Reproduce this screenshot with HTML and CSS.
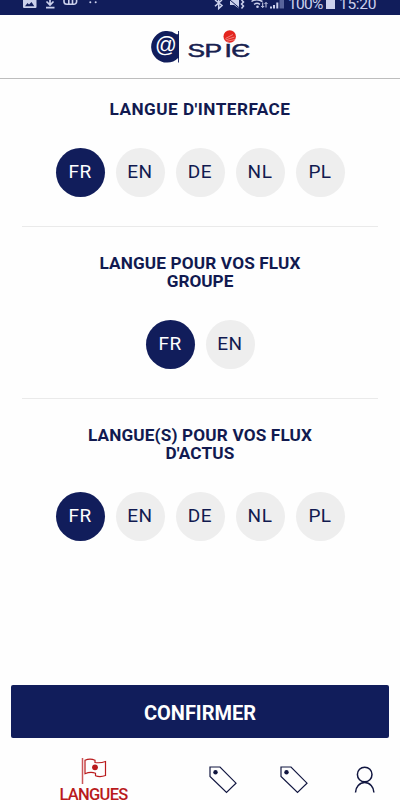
FILE: index.html
```html
<!DOCTYPE html>
<html lang="fr">
<head>
<meta charset="utf-8">
<title>SPIE</title>
<link rel="stylesheet" href="styles.css">
</head>
<body>
<div class="screen">
  <div class="status">
    <svg class="status-left" width="84" height="15" viewBox="0 0 84 15" fill="#ccd1ec">
      <path fill-rule="evenodd" d="M2 0h13.500v7q0 1-1 1H3Q2 8 2 7zM4 6.300h9.300L10.500 2 8 4.600 6.500 3z"/>
      <path d="M29 0v5M25.500 1.500L29 5l3.500-3.500M25 7.700h8.500" fill="none" stroke="#ccd1ec" stroke-width="1.700"/>
      <path d="M43 0v1.500a2.800 2.800 0 0 0 2.800 2.800h7a2.800 2.800 0 0 0 2.800-2.800V0M47.800 0v3.600M51.500 0v3.600" fill="none" stroke="#ccd1ec" stroke-width="1.600"/>
      <circle cx="69.300" cy="2.200" r="1"/><circle cx="74.700" cy="2.200" r="1"/>
    </svg>
    <div class="status-right">
      <svg width="72" height="15" viewBox="0 0 72 15" fill="#ccd1ec">
        <path d="M2 0l7 5.500L5.700 8.500V-2M2 6.300L9 0" fill="none" stroke="#ccd1ec" stroke-width="1.500"/>
        <path d="M17 0h4l5-1v9.500L21 5h-4z"/>
        <path d="M17 0l10 8.500" stroke="#111d5b" stroke-width="1"/>
        <path d="M28.500 0l2 2-2 2 2 2-2 2.500" fill="none" stroke="#ccd1ec" stroke-width="1.500"/>
        <path d="M38.500 1.500q5-3.500 11 0M41 4.300q3-2 6 0" fill="none" stroke="#ccd1ec" stroke-width="1.500"/>
        <circle cx="44.500" cy="6.700" r="1.300"/>
        <path d="M49.700 2.500v5M48.200 6L49.700 7.500l1.500-1.500M53 7.500v-5M51.500 4L53 2.500 54.500 4" fill="none" stroke="#ccd1ec"/>
        <path d="M57 6.500h2v2h-2zM60 5h2v3.500h-2zM63.300 2.500h2v6h-2z"/>
        <path d="M66.500 0h4.500v8.500h-4.500z" fill="#59649b"/>
      </svg>
      <span class="percent">100%</span>
      <span class="battery"></span>
      <span class="clock">15:20</span>
    </div>
  </div>

  <header class="header">
    <svg width="104" height="40" viewBox="0 0 104 40">
      <path d="M31 3v31.500h-.9V30A15.800 15.800 0 1 1 28.500 6.200h1.600V3z" fill="#111d5b"/>
      <text class="logo-at" x="18" y="24" text-anchor="middle">@</text>
      <g transform="translate(39.500 28.500) scale(1.500 1)">
        <text class="logo-name" x="0 11.300 24.700 29.200">SPIЄ</text>
      </g>
      <circle cx="81.700" cy="8.500" r="6.200" fill="#e4251f"/>
      <path d="M77.500 10.500l7.500-4M77.500 12l9-3M79 13.200l8-1.600" stroke="#f7aaa5" stroke-width=".7"/>
    </svg>
  </header>

  <main class="content">
    <section class="group">
      <h2 class="title"><span class="t1">LANGUE D'INTERFACE</span></h2>
      <div class="chips">
        <div class="chip active"><span>FR</span></div><div class="chip"><span>EN</span></div><div class="chip"><span>DE</span></div><div class="chip"><span>NL</span></div><div class="chip"><span>PL</span></div>
      </div>
    </section>
    <section class="group">
      <h2 class="title"><span class="t2">LANGUE POUR VOS FLUX</span><span>GROUPE</span></h2>
      <div class="chips">
        <div class="chip active"><span>FR</span></div><div class="chip"><span>EN</span></div>
      </div>
    </section>
    <section class="group">
      <h2 class="title"><span class="t2">LANGUE(S) POUR VOS FLUX</span><span class="t2">D'ACTUS</span></h2>
      <div class="chips">
        <div class="chip active"><span>FR</span></div><div class="chip"><span>EN</span></div><div class="chip"><span>DE</span></div><div class="chip"><span>NL</span></div><div class="chip"><span>PL</span></div>
      </div>
    </section>
  </main>

  <button class="confirm">CONFIRMER</button>

  <nav class="tabs">
    <div class="tab selected">
      <svg width="26" height="28" viewBox="0 0 26 28" fill="none" stroke="#b91a1c">
        <path d="M1.500 0v26" stroke-width="1.500" stroke="#cb5558"/>
        <path d="M4 2.200q5-2.200 10 0v2.300q5.500.8 10.500-1v14q-5.500 2-10 .2v-2.500q-5-1.700-10.500.5z" stroke-width="1.200"/>
        <circle cx="14" cy="9.300" r="2.900" fill="#b91a1c" stroke="none"/>
      </svg>
      <span class="tab-label">LANGUES</span>
    </div>
    <div class="tab tag">
      <svg width="28" height="28" viewBox="0 0 28 28"><path d="M1 1h10l16 16.200-9.500 9.300L1 10.500z" fill="none" stroke="#111640" stroke-width="1.200"/><circle cx="6.500" cy="6.300" r="2.200" fill="#111640"/></svg>
    </div>
    <div class="tab tag">
      <svg width="28" height="28" viewBox="0 0 28 28"><path d="M1 1h10l16 16.200-9.500 9.300L1 10.500z" fill="none" stroke="#111640" stroke-width="1.200"/><circle cx="6.500" cy="6.300" r="2.200" fill="#111640"/></svg>
    </div>
    <div class="tab user">
      <svg width="22" height="28" viewBox="0 0 22 28" fill="none" stroke="#111640" stroke-width="1.500"><circle cx="10.700" cy="8.500" r="7.300"/><path d="M1.500 26.500a9.200 10 0 0 1 18.400 0"/></svg>
    </div>
  </nav>
</div>
</body>
</html>
```
FILE: styles.css
```css
* { box-sizing: border-box; }
body { margin: 0; background: #fff; font-family: Roboto, "Liberation Sans", sans-serif; color: #111a50; }
.screen { width: 400px; height: 800px; overflow: hidden; display: flex; flex-direction: column; background: #fefefe; }
.status { height: 15px; flex: none; background: #111d5b; display: flex; justify-content: space-between; overflow: hidden; padding: 0 24px 0 21px; }
.status-right { display: flex; color: #ccd1ec; font-size: 15.500px; line-height: 18px; margin-top: -5px; }
.status-right svg { margin-top: 5px; margin-right: 3px; }
.battery { width: 9px; height: 14px; background: #ccd1ec; margin: 0 4px 0 4px; }
.percent { width: 34px; white-space: nowrap; letter-spacing: -.7px; }
.clock { width: 37px; white-space: nowrap; letter-spacing: -.3px; }
.header { height: 64px; flex: none; border-bottom: 1px solid #bdbdbd; display: flex; justify-content: center; padding-top: 13px; }
.logo-at { font: 21.500px "Liberation Sans", sans-serif; fill: #fff; }
.logo-name { font: 17.500px "Liberation Sans", sans-serif; fill: #17214f; stroke: #17214f; stroke-width: .5px; }
.content { padding: 0 22px; flex: none; height: 606px; }
.group { border-bottom: 1px solid #eaeaea; padding-top: 21px; }
.group + .group { padding-top: 27px; }
.group:last-child { border-bottom: 0; }
.title { margin: 0; font-size: 17.200px; font-weight: 700; line-height: 18px; text-align: center; white-space: nowrap; }
.title span { display: block; line-height: 18px; }
.t1 { letter-spacing: .47px; }
.t2 { letter-spacing: .15px; }
.chips { display: flex; justify-content: center; gap: 11px; padding: 30px 0 29px; }
.chip { width: 49px; height: 49px; border-radius: 50%; background: #eee; display: flex; align-items: center; justify-content: center; font-size: 19px; letter-spacing: .5px; padding-bottom: 3px; }
.chip.active { background: #111d5b; color: #fff; }
.confirm { flex: none; margin: 0 11px; height: 53px; border: 0; border-radius: 2px; background: #111d5b; color: #fff; font: 700 20px/53px Roboto, sans-serif; padding: 2px 0 0; }
.tabs { flex: 1; min-height: 0; display: flex; align-items: flex-start; }
.tab { display: flex; flex-direction: column; align-items: center; }
.tab svg { flex: none; }
.selected { width: 187px; padding-top: 20px; color: #b91a1c; }
.tab-label { font-size: 16.500px; font-weight: 500; line-height: 18px; margin-top: 0; letter-spacing: -.7px; }
.tag { width: 71px; padding-top: 28px; }
.user { width: 71px; padding-top: 28px; }
```
